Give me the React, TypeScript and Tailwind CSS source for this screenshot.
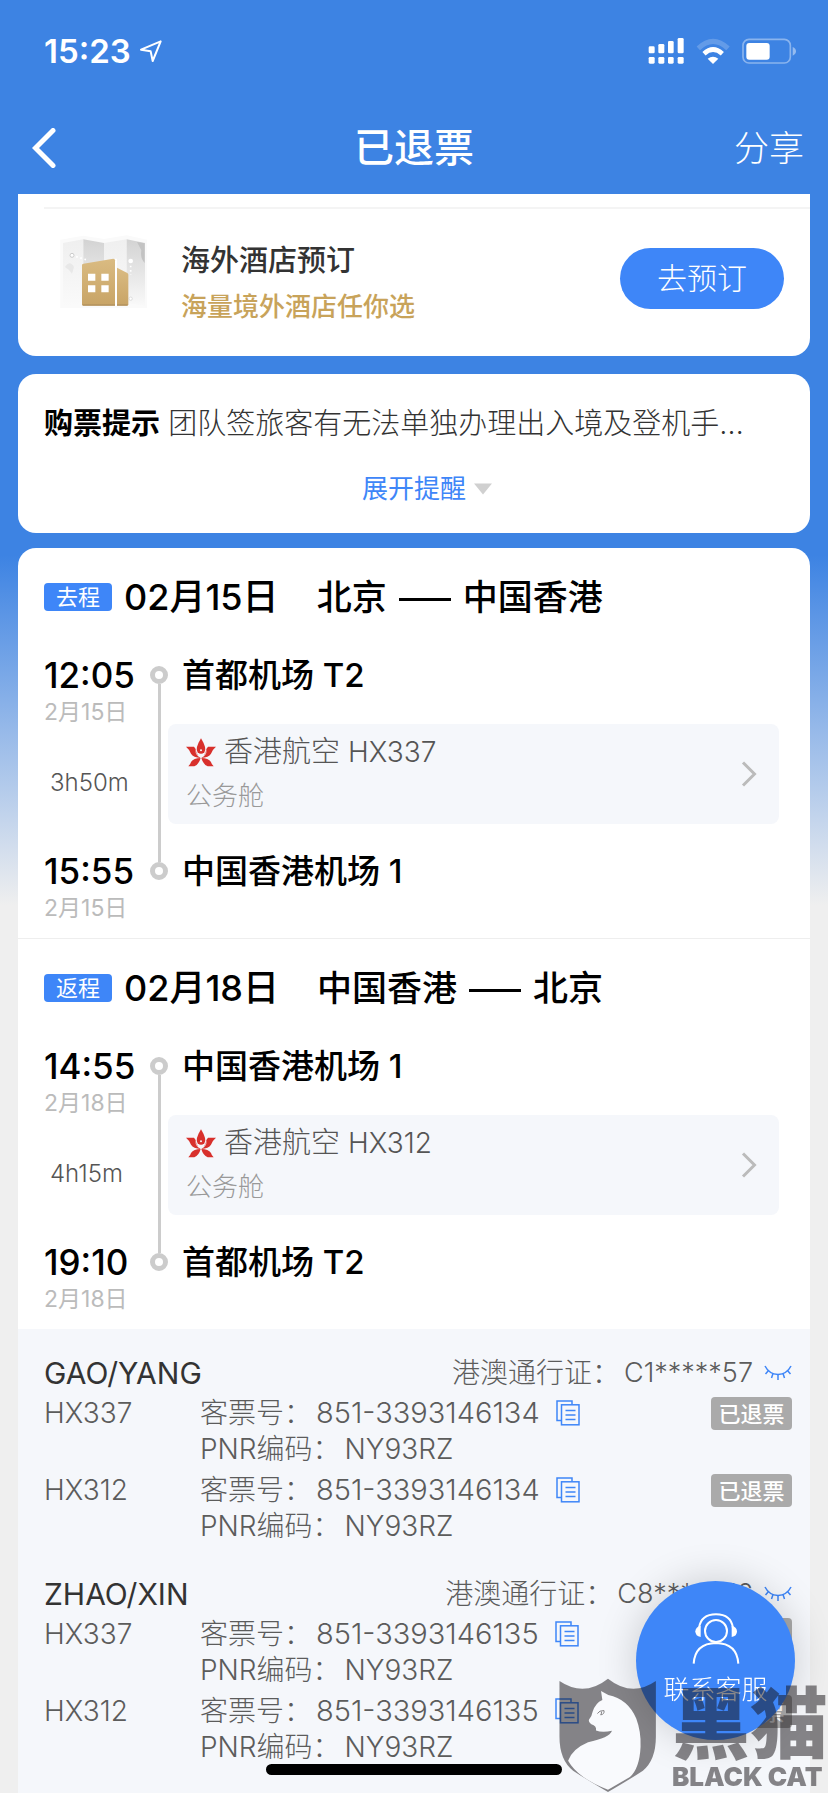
import { Fragment } from 'react';

const trips = [
  {
    tag: '去程',
    date: '02月15日',
    from: '北京',
    to: '中国香港',
    depart: { time: '12:05', day: '2月15日', airport: '首都机场 T2' },
    arrive: { time: '15:55', day: '2月15日', airport: '中国香港机场 1' },
    duration: '3h50m',
    airline: '香港航空',
    flight: 'HX337',
    cabin: '公务舱',
  },
  {
    tag: '返程',
    date: '02月18日',
    from: '中国香港',
    to: '北京',
    depart: { time: '14:55', day: '2月18日', airport: '中国香港机场 1' },
    arrive: { time: '19:10', day: '2月18日', airport: '首都机场 T2' },
    duration: '4h15m',
    airline: '香港航空',
    flight: 'HX312',
    cabin: '公务舱',
  },
];

const passengers = [
  {
    name: 'GAO/YANG',
    permit: 'C1*****57',
    tickets: [
      { flight: 'HX337', number: '851-3393146134', pnr: 'NY93RZ' },
      { flight: 'HX312', number: '851-3393146134', pnr: 'NY93RZ' },
    ],
  },
  {
    name: 'ZHAO/XIN',
    permit: 'C8*****56',
    tickets: [
      { flight: 'HX337', number: '851-3393146135', pnr: 'NY93RZ' },
      { flight: 'HX312', number: '851-3393146135', pnr: 'NY93RZ' },
    ],
  },
];

function StatusBar() {
  return (
    <div className="flex h-[102px] items-center justify-between pl-11 pr-8">
      <div className="flex items-center gap-2">
        <span className="text-[33px] font-semibold leading-10">15:23</span>
        <svg className="h-6 w-6" viewBox="418 116 72 72" fill="none" stroke="currentColor" strokeWidth="6" strokeLinejoin="round">
          <path d="M483 123 L424 148 L453 153 L459 182 Z" />
        </svg>
      </div>
      <div className="flex items-center">
        <svg className="h-7 w-9" viewBox="703 108 108 84" fill="currentColor">
          <rect x="705" y="136" width="18" height="21" rx="4" />
          <rect x="734" y="129" width="18" height="28" rx="4" />
          <rect x="763" y="120" width="17" height="37" rx="4" />
          <rect x="792" y="111" width="18" height="46" rx="4" />
          <rect x="705" y="168" width="18" height="20" rx="4" />
          <rect x="734" y="168" width="18" height="20" rx="4" />
          <rect x="763" y="168" width="17" height="20" rx="4" />
          <rect x="792" y="168" width="18" height="20" rx="4" />
        </svg>
        <svg className="ml-3 h-7 w-[34px]" viewBox="846 108 102 84" fill="none" stroke="currentColor">
          <path d="M853 142 Q897 100 942 142" strokeWidth="15" opacity="0.2" />
          <path d="M870 158 Q897 133 925 158" strokeWidth="14" />
          <path d="M897 189 L881 173 Q897 161 913 173 Z" fill="currentColor" stroke="none" />
        </svg>
        <svg className="ml-3 h-7 w-[54px]" viewBox="985 110 162 84" fill="none">
          <rect x="988" y="117" width="142" height="71" rx="18" stroke="currentColor" strokeWidth="5" opacity="0.4" />
          <rect x="998" y="128" width="70" height="50" rx="9" fill="currentColor" />
          <path d="M1137 140 Q1147 144 1147 153 Q1147 162 1137 166 Z" fill="currentColor" opacity="0.45" />
        </svg>
      </div>
    </div>
  );
}

function HotelIcon() {
  return (
    <svg className="h-20 w-[90px] shrink-0" viewBox="180 160 270 240">
      <defs>
        <linearGradient id="fold" x1="0" y1="0" x2="0" y2="1">
          <stop offset="0" stopColor="#d3d3d3" />
          <stop offset="1" stopColor="#f9f9f9" />
        </linearGradient>
        <linearGradient id="sheet" x1="0" y1="0" x2="0" y2="1">
          <stop offset="0" stopColor="#efefef" />
          <stop offset="1" stopColor="#fafafa" />
        </linearGradient>
        <linearGradient id="gold" x1="0" y1="0" x2="0" y2="1">
          <stop offset="0" stopColor="#dabb82" />
          <stop offset="1" stopColor="#c8a466" />
        </linearGradient>
      </defs>
      <path d="M181 180 L250 168 L312 178 L380 167 L441 180 V385 H181 Z" fill="#fafafa" />
      <path d="M189 190 L250 179 V370 L189 380 Z" fill="url(#sheet)" />
      <path d="M250 179 L312 190 V378 L250 370 Z" fill="url(#fold)" />
      <path d="M312 190 L380 179 V370 L312 378 Z" fill="url(#sheet)" />
      <path d="M380 179 L435 190 V378 L380 370 Z" fill="url(#fold)" />
      <path d="M195 262 Q210 240 222 262 L216 282 Q206 268 195 262Z" fill="#e8e8e8" />
      <path d="M411 187 L434 191 V250 Q420 235 424 212 Z" fill="#c3c3c3" />
      <path d="M216 227 L258 240 M392 245 V285" stroke="#fff" strokeWidth="5" strokeDasharray="5 8" />
      <circle cx="216" cy="227" r="6" fill="#fff" stroke="#ccc" strokeWidth="3" />
      <circle cx="392" cy="244" r="7" fill="#fff" />
      <circle cx="392" cy="357" r="5" fill="#fff" stroke="#ddd" strokeWidth="3" />
      <path d="M345 237 h6 V378 h-6 Z" fill="#fff" />
      <path d="M246 256 Q246 253 250 252 L340 237 Q345 237 345 242 V378 H250 Q246 378 246 374 Z" fill="url(#gold)" />
      <path d="M351 264 L382 280 Q385 282 385 285 V374 Q385 378 381 378 H351 Z" fill="url(#gold)" />
      <path d="M248 376 H345 M351 376 H383" stroke="#a98a5b" strokeWidth="3" />
      <path d="M264 282 h22 v21 h-22z M304 282 h22 v21 h-22z M264 317 h22 v21 h-22z M304 317 h22 v21 h-22z" fill="#fff" />
    </svg>
  );
}

function AirlineLogo() {
  return (
    <svg className="h-[29px] w-[30px] shrink-0" viewBox="558 595 90 87" fill="#d8302c">
      <path d="M603 596 Q622 627 613 638 Q603 647 593 638 Q584 627 603 596Z" />
      <path d="M558 621 H582 Q588 626 589 637 Q592 649 602 655 Q580 653 573 642 Q569 630 558 621Z" />
      <path d="M648 621 H624 Q618 626 617 637 Q614 649 604 655 Q626 653 633 642 Q637 630 648 621Z" />
      <path d="M565 680 Q571 675 573 667 Q581 655 602 655 Q597 674 583 680Z" />
      <path d="M641 680 Q635 675 633 667 Q625 655 604 655 Q609 674 623 680Z" />
      <g fill="none" stroke="#f5f7fb" strokeWidth="2">
        <path d="M588 630 Q586 650 603 651 Q620 650 618 630" />
      </g>
      <circle cx="603" cy="632" r="3" fill="#f5f7fb" />
    </svg>
  );
}

function CopyIcon() {
  return (
    <svg className="h-[26px] w-6" viewBox="0 0 24 26" fill="none" stroke="#3e86f8" strokeWidth="1.5">
      <path d="M5 20.5 H1 V1 H16 V4.5" />
      <rect x="5.5" y="4.8" width="17.5" height="20" />
      <path d="M9.5 10.5 h10 M9.5 15 h10 M9.5 19.5 h10" />
    </svg>
  );
}

function EyeClosedIcon() {
  return (
    <svg className="h-4 w-7" viewBox="0 0 28 16" fill="none" stroke="#3e86f8" strokeWidth="1.5">
      <path d="M1 1 Q5 9 14 9.5 Q23 9 27 1" />
      <path d="M4.5 5.5 L1.5 9 M9 8.5 L7.5 13 M14 9.5 V15 M19 8.5 L20.5 13 M23.5 5.5 L26.5 9" />
    </svg>
  );
}

function Rail() {
  return (
    <div className="flex w-[18px] flex-col items-center pb-[43px] pt-[11px]">
      <span className="h-[18px] w-[18px] rounded-full border-[5px] border-[#cccccc]" />
      <span className="w-[3px] flex-1 bg-[#cccccc]" />
      <span className="h-[18px] w-[18px] rounded-full border-[5px] border-[#cccccc]" />
    </div>
  );
}

function Stop({ time, day }: { time: string; day: string }) {
  return (
    <div>
      <div className="text-[35px] font-medium leading-10">{time}</div>
      <div className="mt-0.5 text-[23px] leading-[30px] text-[#bbbbbb]">{day}</div>
    </div>
  );
}

function Trip({ trip }: { trip: (typeof trips)[number] }) {
  return (
    <section className="pb-[15px] pl-[26px] pr-[31px] pt-[27px] text-black">
      <h2 className="flex items-center text-[36px] font-medium leading-[44px]">
        <span className="flex h-7 w-[68px] items-center justify-center rounded bg-[#3e86f8] text-[22px] font-normal text-white">{trip.tag}</span>
        <span className="ml-3">{trip.date}</span>
        <span className="ml-[38px] flex items-center gap-3 text-[35px]">
          {trip.from}
          <span className="mt-1 h-[3px] w-[52px] bg-black" />
          {trip.to}
        </span>
      </h2>
      <div className="mt-9 flex">
        <div className="flex w-[106px] flex-col justify-between">
          <Stop time={trip.depart.time} day={trip.depart.day} />
          <div className="pb-3 pl-1.5 text-2xl font-light text-[#555555]">{trip.duration}</div>
          <Stop time={trip.arrive.time} day={trip.arrive.day} />
        </div>
        <Rail />
        <div className="flex-1 pb-8">
          <h3 className="pl-3.5 text-[33px] font-medium leading-10">{trip.depart.airport}</h3>
          <a href="#flight" className="mb-[27px] mt-[29px] flex h-[100px] items-center justify-between rounded-lg bg-[#f5f7fb] pl-[18px] pr-[22px]">
            <div>
              <div className="flex items-center gap-2 text-[29px] font-light leading-10 text-[#555555]">
                <AirlineLogo />
                <span>{trip.airline}</span>
                <span className="text-[28px]">{trip.flight}</span>
              </div>
              <div className="mt-1 text-[26px] font-light leading-10 text-[#999999]">{trip.cabin}</div>
            </div>
            <svg className="h-[26px] w-4" viewBox="0 0 16 26" fill="none" stroke="#bbbbbb" strokeWidth="3">
              <path d="M2 1.5 L13.5 13 L2 24.5" />
            </svg>
          </a>
          <h3 className="pl-3.5 text-[33px] font-medium leading-10">{trip.arrive.airport}</h3>
        </div>
      </div>
    </section>
  );
}

function Passenger({ passenger }: { passenger: (typeof passengers)[number] }) {
  return (
    <section className="text-[28px] font-light leading-9 text-[#5c5c5c]">
      <div className="flex items-center justify-between">
        <h3 className="text-[30px] font-normal text-[#333333]">{passenger.name}</h3>
        <div className="flex items-center">
          <span>港澳通行证：</span>
          <span className="ml-1 text-[27px]">{passenger.permit}</span>
          <button type="button" aria-label="显示证件号" className="ml-[11px]">
            <EyeClosedIcon />
          </button>
        </div>
      </div>
      <div className="mt-1 flex flex-col gap-[5px]">
        {passenger.tickets.map((ticket) => (
          <div key={ticket.flight} className="flex items-start">
            <span className="w-[156px]">{ticket.flight}</span>
            <div className="flex-1">
              <div className="flex items-center">
                <span>客票号：</span>
                <span className="ml-1 text-[29px]">{ticket.number}</span>
                <button type="button" aria-label="复制客票号" className="ml-4">
                  <CopyIcon />
                </button>
              </div>
              <div>
                <span>PNR编码：</span>
                <span className="ml-1">{ticket.pnr}</span>
              </div>
            </div>
            <span className="mt-0.5 flex h-[33px] w-[81px] items-center justify-center rounded-sm bg-[#aaaaaa] text-[22px] font-medium text-white">
              已退票
            </span>
          </div>
        ))}
      </div>
    </section>
  );
}

function ServiceButton() {
  return (
    <button
      type="button"
      className="fixed bottom-[53px] right-[33px] z-10 flex h-[159px] w-[159px] flex-col items-center rounded-full bg-[#3e86f8] pt-8 text-white shadow-[0_0_40px_rgba(0,0,0,0.18)]"
    >
      <svg className="h-[51px] w-12" viewBox="491 187 144 153" fill="none" stroke="currentColor" strokeWidth="6">
        <circle cx="563" cy="241" r="33" />
        <path d="M512 232 Q518 191 563 191 Q608 191 614 232" />
        <path d="M517 226 V259 Q501 257 501 242 Q502 228 517 226Z" fill="currentColor" stroke="none" />
        <path d="M610 226 V259 Q626 257 626 242 Q625 228 610 226Z" fill="currentColor" stroke="none" />
        <path d="M496 339 Q500 278 563 277 Q626 278 630 339" />
      </svg>
      <span className="mt-2 text-[26px] font-light leading-9">联系客服</span>
    </button>
  );
}

function Watermark() {
  return (
    <div className="pointer-events-none fixed bottom-0 right-0 z-20 flex items-end gap-3.5 text-[#141014]/50">
      <svg className="h-[116px] w-[100px]" viewBox="90 380 300 349">
        <path
          d="M94 392 Q168 442 240 385 Q312 442 384 392 V560 Q384 630 345 662 Q315 682 240 726 Q165 682 135 662 Q94 630 94 560 Z"
          fill="currentColor"
        />
        <path
          d="M219 422 L241 434 Q300 446 325 505 Q340 545 338 590 Q335 655 306 681 L240 719 Q150 685 120 632 Q132 596 180 576 Q244 564 252 542 Q222 548 204 541 Q206 526 190 522 Q180 515 183 508 Q191 500 194 484 Q202 458 223 449 Z"
          fill="#f9fafd"
        />
        <path d="M208 490 Q214 480 228 481 Q230 492 218 494 Q222 488 220 484" fill="none" stroke="#868487" strokeWidth="3" />
      </svg>
      <div className="flex flex-col">
        <span className="text-[78px] font-black leading-[72px]">黑猫</span>
        <span className="text-[26px] font-black leading-8">BLACK CAT</span>
      </div>
    </div>
  );
}

export default function App() {
  return (
    <div className="flex min-h-screen flex-col bg-[#efefef] bg-[linear-gradient(#3d83e3_555px,#efefef_905px)] font-['Inter','Noto_Sans_CJK_SC',sans-serif]">
      <header className="text-white">
        <StatusBar />
        <nav className="grid h-[92px] grid-cols-3 items-center px-6">
          <button type="button" aria-label="返回" className="justify-self-start pl-2">
            <svg className="h-10 w-6" viewBox="0 0 24 40" fill="none" stroke="currentColor" strokeWidth="5" strokeLinecap="round">
              <path d="M21 2.5 L3.5 20 L21 37.5" />
            </svg>
          </button>
          <h1 className="justify-self-center text-[40px] font-medium">已退票</h1>
          <button type="button" className="justify-self-end text-[35px] font-light">分享</button>
        </nav>
      </header>

      <main className="flex flex-1 flex-col px-[18px]">
        <section className="rounded-b-[18px] bg-white pt-[13px]">
          <div className="ml-[26px] border-t-2 border-[#f4f4f4]" />
          <div className="flex items-start pb-[29px] pl-[42px] pr-[26px] pt-6">
            <HotelIcon />
            <div className="ml-[31px] mt-2 flex flex-1 flex-col gap-1.5 leading-10">
              <h2 className="text-[29px] font-medium text-[#333333]">海外酒店预订</h2>
              <p className="text-[26px] font-medium text-[#c8a35a]">海量境外酒店任你选</p>
            </div>
            <button type="button" className="mt-[15px] h-[61px] w-[164px] rounded-full bg-[#3e86f8] text-[30px] font-light text-white">
              去预订
            </button>
          </div>
        </section>

        <section className="mt-[18px] flex flex-col items-center rounded-[18px] bg-white px-[26px] pb-[26px] pt-[30px]">
          <p className="w-full truncate text-[29px] font-light leading-10 text-[#333333]">
            <b className="font-bold text-black">购票提示</b> 团队签旅客有无法单独办理出入境及登机手…
          </p>
          <button type="button" className="mt-[27px] flex items-center gap-2 pl-[26px] text-[26px] leading-9 text-[#3e86f8]">
            展开提醒
            <svg className="h-3 w-[18px]" viewBox="0 0 18 12" fill="#d0d0d0">
              <path d="M0 0.5 H18 L9 11.5 Z" />
            </svg>
          </button>
        </section>

        <div className="mt-[15px] flex flex-1 flex-col rounded-t-[18px] bg-white">
          {trips.map((trip, index) => (
            <Fragment key={trip.tag}>
              {index > 0 && <div className="border-t border-[#eeeeee]" />}
              <Trip trip={trip} />
            </Fragment>
          ))}
          <div className="flex flex-1 flex-col gap-8 bg-[#f5f7fb] pb-6 pl-[26px] pr-[18px] pt-[26px]">
            {passengers.map((passenger) => (
              <Passenger key={passenger.name} passenger={passenger} />
            ))}
          </div>
        </div>
      </main>

      <ServiceButton />
      <div className="fixed bottom-[18px] left-1/2 h-[11px] w-[296px] -translate-x-1/2 rounded-full bg-black" />
      <Watermark />
    </div>
  );
}
